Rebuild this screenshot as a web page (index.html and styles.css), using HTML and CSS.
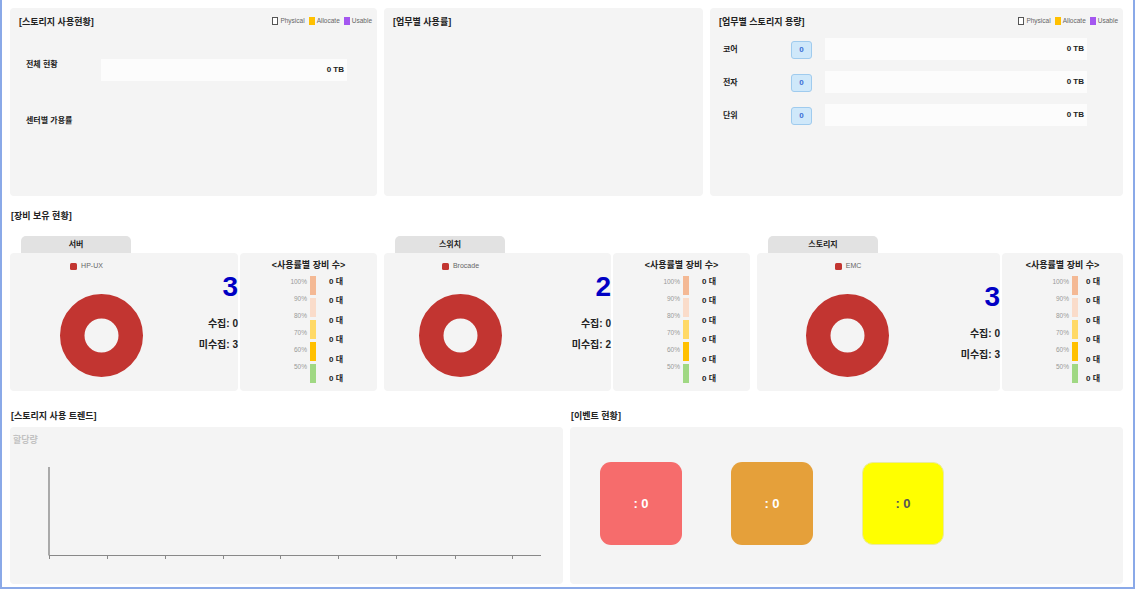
FILE: index.html
```html
<!DOCTYPE html>
<html lang="ko">
<head>
<meta charset="utf-8">
<title>Storage Dashboard</title>
<link rel="stylesheet" href="styles.css">
</head>
<body>
<div class="frame">
  <div class="top-row">
    <section class="panel p-usage">
      <div class="panel-head">
        <h2 class="title">[스토리지 사용현황]</h2>
        <div class="legend">
          <span class="lg-box lg-phys"></span><span class="lg-txt">Physical</span>
          <span class="lg-box lg-alloc"></span><span class="lg-txt">Allocate</span>
          <span class="lg-box lg-usable"></span><span class="lg-txt">Usable</span>
        </div>
      </div>
      <div class="total-row">
        <span class="lbl lbl-total">전체 현황</span>
        <div class="cap-bar cap-bar-total">0 TB</div>
      </div>
      <div class="lbl center-lbl">센터별 가용률</div>
    </section>

    <section class="panel">
      <div class="panel-head">
        <h2 class="title">[업무별 사용률]</h2>
      </div>
    </section>

    <section class="panel p-biz">
      <div class="panel-head">
        <h2 class="title">[업무별 스토리지 용량]</h2>
        <div class="legend">
          <span class="lg-box lg-phys"></span><span class="lg-txt">Physical</span>
          <span class="lg-box lg-alloc"></span><span class="lg-txt">Allocate</span>
          <span class="lg-box lg-usable"></span><span class="lg-txt">Usable</span>
        </div>
      </div>
      <div class="biz-rows">
        <div class="biz-row"><span class="lbl biz-lbl">코어</span><span class="badge">0</span><div class="cap-bar cap-bar-biz">0 TB</div></div>
        <div class="biz-row"><span class="lbl biz-lbl">전자</span><span class="badge">0</span><div class="cap-bar cap-bar-biz">0 TB</div></div>
        <div class="biz-row"><span class="lbl biz-lbl">단위</span><span class="badge">0</span><div class="cap-bar cap-bar-biz">0 TB</div></div>
      </div>
    </section>
  </div>

  <h2 class="sec-title sec-devices">[장비 보유 현황]</h2>

  <div class="groups">
    <div class="group g-server">
      <div class="tab">서버</div>
      <div class="group-body">
        <div class="dev-panel">
          <div class="chart">
            <div class="dlegend"><span class="dl-sq"></span>HP-UX</div>
            <svg class="donut" width="83" height="83" viewBox="0 0 83 83"><circle cx="41.5" cy="41.5" r="29.25" fill="none" stroke="#c23531" stroke-width="24.5"/></svg>
          </div>
          <div class="stats">
            <div class="big">3</div>
            <div class="stat stat-first">수집: 0</div>
            <div class="stat">미수집: 3</div>
          </div>
        </div>
        <div class="use-panel">
          <div class="use-title">&lt;사용률별 장비 수&gt;</div>
          <div class="use-chart">
            <div class="use-labels"><span>100%</span><span>90%</span><span>80%</span><span>70%</span><span>60%</span><span>50%</span></div>
            <div class="use-bars"><span class="ub ub1"></span><span class="ub ub2"></span><span class="ub ub3"></span><span class="ub ub4"></span><span class="ub ub5"></span></div>
            <div class="use-vals"><span>0 대</span><span>0 대</span><span>0 대</span><span>0 대</span><span>0 대</span><span>0 대</span></div>
          </div>
        </div>
      </div>
    </div>

    <div class="group g-switch">
      <div class="tab">스위치</div>
      <div class="group-body">
        <div class="dev-panel">
          <div class="chart">
            <div class="dlegend"><span class="dl-sq"></span>Brocade</div>
            <svg class="donut" width="83" height="83" viewBox="0 0 83 83"><circle cx="41.5" cy="41.5" r="29.25" fill="none" stroke="#c23531" stroke-width="24.5"/></svg>
          </div>
          <div class="stats">
            <div class="big">2</div>
            <div class="stat stat-first">수집: 0</div>
            <div class="stat">미수집: 2</div>
          </div>
        </div>
        <div class="use-panel">
          <div class="use-title">&lt;사용률별 장비 수&gt;</div>
          <div class="use-chart">
            <div class="use-labels"><span>100%</span><span>90%</span><span>80%</span><span>70%</span><span>60%</span><span>50%</span></div>
            <div class="use-bars"><span class="ub ub1"></span><span class="ub ub2"></span><span class="ub ub3"></span><span class="ub ub4"></span><span class="ub ub5"></span></div>
            <div class="use-vals"><span>0 대</span><span>0 대</span><span>0 대</span><span>0 대</span><span>0 대</span><span>0 대</span></div>
          </div>
        </div>
      </div>
    </div>

    <div class="group g-storage">
      <div class="tab">스토리지</div>
      <div class="group-body">
        <div class="dev-panel">
          <div class="chart">
            <div class="dlegend"><span class="dl-sq"></span>EMC</div>
            <svg class="donut" width="83" height="83" viewBox="0 0 83 83"><circle cx="41.5" cy="41.5" r="29.25" fill="none" stroke="#c23531" stroke-width="24.5"/></svg>
          </div>
          <div class="stats">
            <div class="big">3</div>
            <div class="stat stat-first">수집: 0</div>
            <div class="stat">미수집: 3</div>
          </div>
        </div>
        <div class="use-panel">
          <div class="use-title">&lt;사용률별 장비 수&gt;</div>
          <div class="use-chart">
            <div class="use-labels"><span>100%</span><span>90%</span><span>80%</span><span>70%</span><span>60%</span><span>50%</span></div>
            <div class="use-bars"><span class="ub ub1"></span><span class="ub ub2"></span><span class="ub ub3"></span><span class="ub ub4"></span><span class="ub ub5"></span></div>
            <div class="use-vals"><span>0 대</span><span>0 대</span><span>0 대</span><span>0 대</span><span>0 대</span><span>0 대</span></div>
          </div>
        </div>
      </div>
    </div>
  </div>

  <div class="bottom-row">
    <div class="col">
      <h2 class="sec-title sec-bottom">[스토리지 사용 트렌드]</h2>
      <div class="panel trend">
        <div class="trend-lbl">할당량</div>
        <svg class="trend-chart" width="550" height="138" viewBox="0 0 550 138">
          <line x1="36" y1="21" x2="36" y2="109.5" stroke="#777" stroke-width="1.2"/>
          <line x1="36" y1="109.5" x2="528" y2="109.5" stroke="#888" stroke-width="1.2"/>
          <g stroke="#888" stroke-width="1">
            <line x1="36.5" y1="109" x2="36.5" y2="113"/>
            <line x1="94.5" y1="109" x2="94.5" y2="113"/>
            <line x1="152.5" y1="109" x2="152.5" y2="113"/>
            <line x1="210.5" y1="109" x2="210.5" y2="113"/>
            <line x1="267.5" y1="109" x2="267.5" y2="113"/>
            <line x1="325.5" y1="109" x2="325.5" y2="113"/>
            <line x1="383.5" y1="109" x2="383.5" y2="113"/>
            <line x1="442.5" y1="109" x2="442.5" y2="113"/>
            <line x1="499.5" y1="109" x2="499.5" y2="113"/>
          </g>
        </svg>
      </div>
    </div>
    <div class="col">
      <h2 class="sec-title sec-bottom">[이벤트 현황]</h2>
      <div class="panel events">
        <div class="ev ev-red">: 0</div>
        <div class="ev ev-orange">: 0</div>
        <div class="ev ev-yellow">: 0</div>
      </div>
    </div>
  </div>
</div>
</body>
</html>
```

FILE: styles.css
```css
* { box-sizing: border-box; }
html, body { margin: 0; padding: 0; background: #fff; }
body {
  font-family: "Liberation Sans", "Noto Sans CJK KR", sans-serif;
  color: #222;
}
h2 { margin: 0; font-weight: bold; }

.frame {
  width: 1135px;
  height: 589px;
  border: 2px solid #8aa9e8;
  border-top: 0;
  padding: 8px 10px 0 8px;
}

/* ---------- top row ---------- */
.top-row {
  display: grid;
  grid-template-columns: 367px 319px 413px;
  column-gap: 7px;
  height: 188px;
}
.panel {
  background: #f4f4f4;
  border-radius: 4px;
}
.top-row .panel { padding: 8px 5px 0 9px; }
.panel-head {
  display: flex;
  justify-content: space-between;
  align-items: center;
  height: 12px;
}
.title {
  font-size: 9px;
  line-height: 12px;
}
.legend {
  display: flex;
  align-items: center;
  font-size: 6.5px;
  color: #666;
  margin-top: -3px;
}
.lg-box {
  display: inline-block;
  width: 6px;
  height: 8px;
  margin-right: 2px;
}
.lg-txt { margin-right: 4px; }
.lg-txt:last-child { margin-right: 0; }
.lg-phys { background: #fff; border: 1px solid #555; }
.lg-alloc { background: #ffc000; }
.lg-usable { background: #a457f0; }

.lbl {
  font-size: 8px;
  font-weight: bold;
  line-height: 12px;
}
.total-row {
  display: flex;
  align-items: flex-start;
  margin-top: 31px;
  padding-left: 7px;
}
.lbl-total { width: 75px; }
.cap-bar {
  background: #fcfcfc;
  height: 22px;
  font-size: 8px;
  font-weight: bold;
  line-height: 22px;
  text-align: right;
  padding-right: 3px;
}
.cap-bar-total { width: 246px; }
.center-lbl {
  margin-top: 34px;
  padding-left: 7px;
}

.biz-rows {
  display: flex;
  flex-direction: column;
  gap: 11px;
  margin-top: 10px;
  padding-left: 4px;
}
.biz-row {
  display: flex;
  align-items: center;
  height: 22px;
}
.biz-lbl { width: 68px; padding-top: 2px; }
.badge {
  width: 21px;
  height: 18px;
  border: 1px solid #9fcbee;
  background: #cfe8fa;
  border-radius: 3px;
  color: #3b6fd6;
  font-size: 8px;
  font-weight: bold;
  line-height: 16px;
  text-align: center;
  margin-top: 2px;
}
.cap-bar-biz {
  width: 262px;
  margin-left: 13px;
}

/* ---------- section titles ---------- */
.sec-title {
  font-size: 9px;
  line-height: 12px;
  margin-left: 1px;
}
.sec-devices { margin-top: 14px; margin-bottom: 14px; }
.sec-bottom { margin-top: 19px; margin-bottom: 5px; }

/* ---------- device groups ---------- */
.groups {
  display: grid;
  grid-template-columns: 367px 366px 366px;
  column-gap: 7px;
}
.tab {
  margin-left: 11px;
  width: 110px;
  height: 17px;
  background: #e2e2e2;
  border-radius: 5px 5px 0 0;
  font-size: 8px;
  font-weight: bold;
  line-height: 18px;
  text-align: center;
}
.group-body {
  display: grid;
  grid-template-columns: 1fr 137px;
  column-gap: 2px;
  height: 138px;
}
.g-storage .group-body { grid-template-columns: 1fr 121px; }

.dev-panel {
  background: #f4f4f4;
  border-radius: 4px;
  display: flex;
}
.chart { padding-top: 8px; }
.dlegend {
  display: flex;
  justify-content: center;
  align-items: center;
  font-size: 7px;
  color: #666;
  line-height: 10px;
  width: 153px;
}
.g-storage .dlegend { width: 182px; }
.dl-sq {
  width: 7px;
  height: 7px;
  border-radius: 1.5px;
  background: #c23531;
  margin-right: 4px;
}
.donut {
  display: block;
  margin-top: 23px;
  margin-left: 50px;
}
.g-switch .donut { margin-left: 35px; }
.g-storage .donut { margin-left: 49px; }

.stats {
  flex: 1;
  text-align: right;
  padding-top: 20px;
  font-weight: bold;
}
.g-storage .stats { padding-top: 30px; }
.big {
  font-size: 28px;
  line-height: 28px;
  color: #0000c4;
}
.stat {
  font-size: 10px;
  line-height: 21px;
}
.stat-first { margin-top: 12px; }

.use-panel {
  background: #f4f4f4;
  border-radius: 4px;
  padding-top: 6px;
}
.use-title {
  font-size: 9px;
  font-weight: bold;
  line-height: 12px;
  text-align: center;
}
.use-chart {
  display: flex;
  margin-top: 5px;
}
.use-labels {
  width: 67px;
  display: flex;
  flex-direction: column;
  align-items: flex-end;
  margin-top: -3px;
  font-size: 6.5px;
  color: #999;
  line-height: 17px;
}
.use-bars {
  display: flex;
  flex-direction: column;
  gap: 3px;
  margin-left: 3px;
}
.ub { display: block; width: 6px; height: 19px; }
.ub1 { background: #f4b995; }
.ub2 { background: #fadcca; }
.ub3 { background: #ffd966; }
.ub4 { background: #ffc000; }
.ub5 { background: #a0d883; }
.use-vals {
  display: flex;
  flex-direction: column;
  margin-left: 13px;
  margin-top: -4px;
  font-size: 8px;
  font-weight: bold;
  line-height: 19.4px;
}
.g-storage .use-vals { margin-left: 8px; }

/* ---------- bottom row ---------- */
.bottom-row {
  display: grid;
  grid-template-columns: 553px 553px;
  column-gap: 7px;
}
.trend, .events { height: 157px; }
.trend { padding: 7px 0 0 3px; }
.trend-lbl {
  font-size: 9px;
  font-weight: bold;
  color: #c2c2c2;
  line-height: 12px;
}
.trend-chart { display: block; }

.events {
  display: flex;
  gap: 49px;
  padding: 35px 0 0 30px;
}
.ev {
  width: 82px;
  height: 83px;
  border-radius: 11px;
  display: flex;
  align-items: center;
  justify-content: center;
  font-size: 13px;
  font-weight: bold;
  color: #fff;
}
.ev-red { background: #f66c6c; }
.ev-orange { background: #e5a03a; }
.ev-yellow { background: #ffff00; color: #555; border: 1px solid #eaeaa0; }
```
